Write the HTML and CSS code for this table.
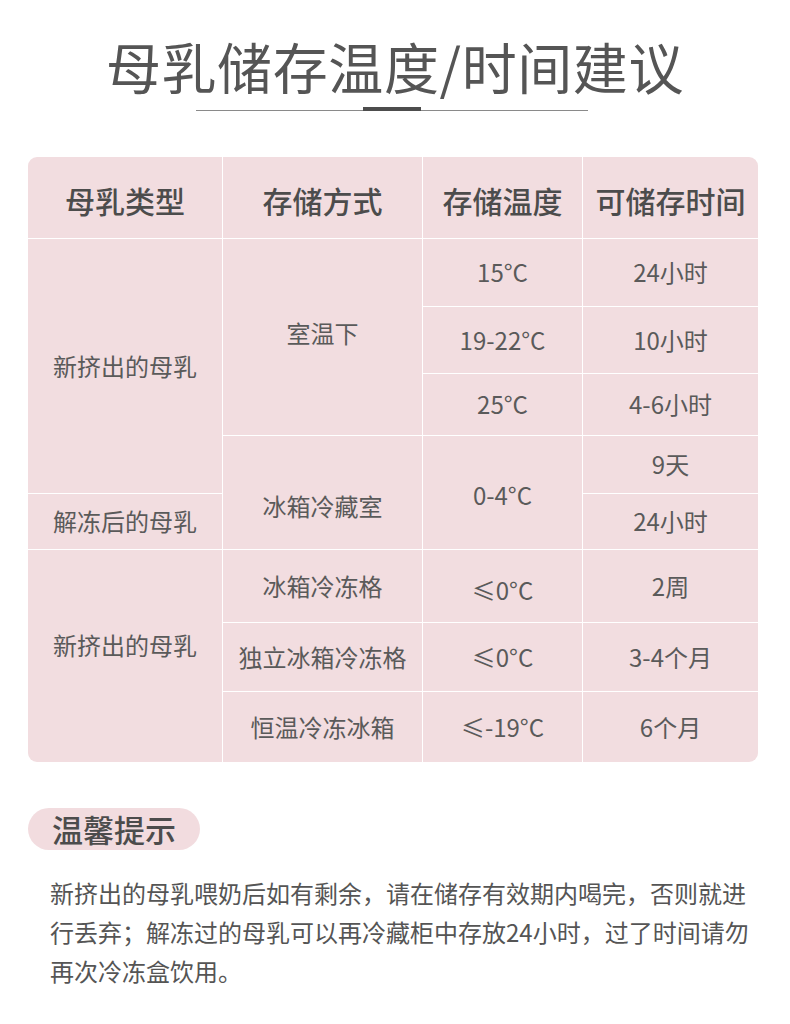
FILE: index.html
```html
<!DOCTYPE html>
<html lang="zh-CN">
<head>
<meta charset="utf-8">
<title>母乳储存温度/时间建议</title>
<link rel="stylesheet" href="styles.css">
</head>
<body>
<header class="head">
  <h1 class="title">母乳储存温度/时间建议</h1>
  <div class="rule"><span class="rule-mark"></span></div>
</header>

<section class="table">
  <div class="cell th col1 row1">母乳类型</div>
  <div class="cell th col2 row1">存储方式</div>
  <div class="cell th col3 row1">存储温度</div>
  <div class="cell th col4 row1">可储存时间</div>

  <div class="cell col1 fresh-top">新挤出的母乳</div>
  <div class="cell col1 row6">解冻后的母乳</div>
  <div class="cell col1 fresh-bottom">新挤出的母乳</div>

  <div class="cell col2 room">室温下</div>
  <div class="cell col2 fridge">冰箱冷藏室</div>
  <div class="cell col2 row7">冰箱冷冻格</div>
  <div class="cell col2 row8">独立冰箱冷冻格</div>
  <div class="cell col2 row9">恒温冷冻冰箱</div>

  <div class="cell col3 row2">15°C</div>
  <div class="cell col3 row3">19-22°C</div>
  <div class="cell col3 row4">25°C</div>
  <div class="cell col3 fridge-temp">0-4°C</div>
  <div class="cell col3 row7 low">≤0°C</div>
  <div class="cell col3 row8">≤0°C</div>
  <div class="cell col3 row9">≤-19°C</div>

  <div class="cell col4 row2">24小时</div>
  <div class="cell col4 row3">10小时</div>
  <div class="cell col4 row4">4-6小时</div>
  <div class="cell col4 row5">9天</div>
  <div class="cell col4 row6">24小时</div>
  <div class="cell col4 row7">2周</div>
  <div class="cell col4 row8">3-4个月</div>
  <div class="cell col4 row9">6个月</div>
</section>

<section class="tips">
  <h2 class="tips-badge">温馨提示</h2>
  <p class="tips-text">新挤出的母乳喂奶后如有剩余，请在储存有效期内喝完，否则就进行丢弃；解冻过的母乳可以再冷藏柜中存放24小时，过了时间请勿再次冷冻盒饮用。</p>
</section>
</body>
</html>
```

FILE: styles.css
```css
html, body {
  margin: 0;
  padding: 0;
  background: #ffffff;
}

body {
  width: 790px;
  font-family: "Noto Sans CJK SC", "Noto Sans", sans-serif;
  color: #595959;
}

.head {
  padding-top: 33px;
}

.title {
  margin: 0;
  font-size: 55px;
  line-height: 65px;
  font-weight: 400;
  color: #555555;
  text-align: center;
  letter-spacing: 0.6px;
}

.rule {
  width: 392px;
  height: 4px;
  margin: 9px 0 0 196px;
  display: flex;
  justify-content: center;
  align-items: flex-end;
  background: linear-gradient(#8a8a8a, #8a8a8a) left bottom / 100% 1px no-repeat;
}

.rule-mark {
  width: 58px;
  height: 4px;
  background: #4d4d4d;
}

.table {
  margin: 46px 0 0 28px;
  width: 730px;
  display: grid;
  grid-template-columns: 194px 199px 159px 175px;
  grid-template-rows: 81px 67px 66px 61px 57px 55px 72px 68px 70px;
  gap: 1px;
  background: #ffffff;
  border-radius: 9px;
  overflow: hidden;
}

.cell {
  background: #f2dde0;
  display: flex;
  align-items: center;
  justify-content: center;
  font-size: 24px;
  line-height: 1.2;
  color: #5a5a5a;
  white-space: nowrap;
}

.th {
  font-size: 30px;
  font-weight: 500;
  color: #4c4c4c;
  padding-top: 4px;
}

.col1 { grid-column: 1; }
.col2 { grid-column: 2; }
.col3 { grid-column: 3; }
.col4 { grid-column: 4; }

.row1 { grid-row: 1; }
.row2 { grid-row: 2; }
.row3 { grid-row: 3; }
.row4 { grid-row: 4; }
.row5 { grid-row: 5; }
.row6 { grid-row: 6; }
.row7 { grid-row: 7; }
.row8 { grid-row: 8; }
.row9 { grid-row: 9; }

.fresh-top { grid-row: 2 / 6; }
.fresh-bottom { grid-row: 7 / 10; padding-bottom: 22px; }
.room { grid-row: 2 / 5; padding-bottom: 8px; }
.fridge { grid-row: 5 / 7; padding-top: 28px; }
.fridge-temp { grid-row: 5 / 7; padding-top: 6px; }
.low { padding-top: 8px; }

.tips {
  padding: 46px 0 0 28px;
}

.tips-badge {
  display: inline-block;
  margin: 0;
  height: 42px;
  padding: 0 24px;
  border-radius: 21px;
  background: #f2dcdf;
  font-size: 31px;
  line-height: 42px;
  font-weight: 500;
  color: #4c4c4c;
}

.tips-text {
  margin: 23px 0 0 22px;
  width: 704px;
  font-size: 24px;
  line-height: 39px;
  color: #555555;
}
```
